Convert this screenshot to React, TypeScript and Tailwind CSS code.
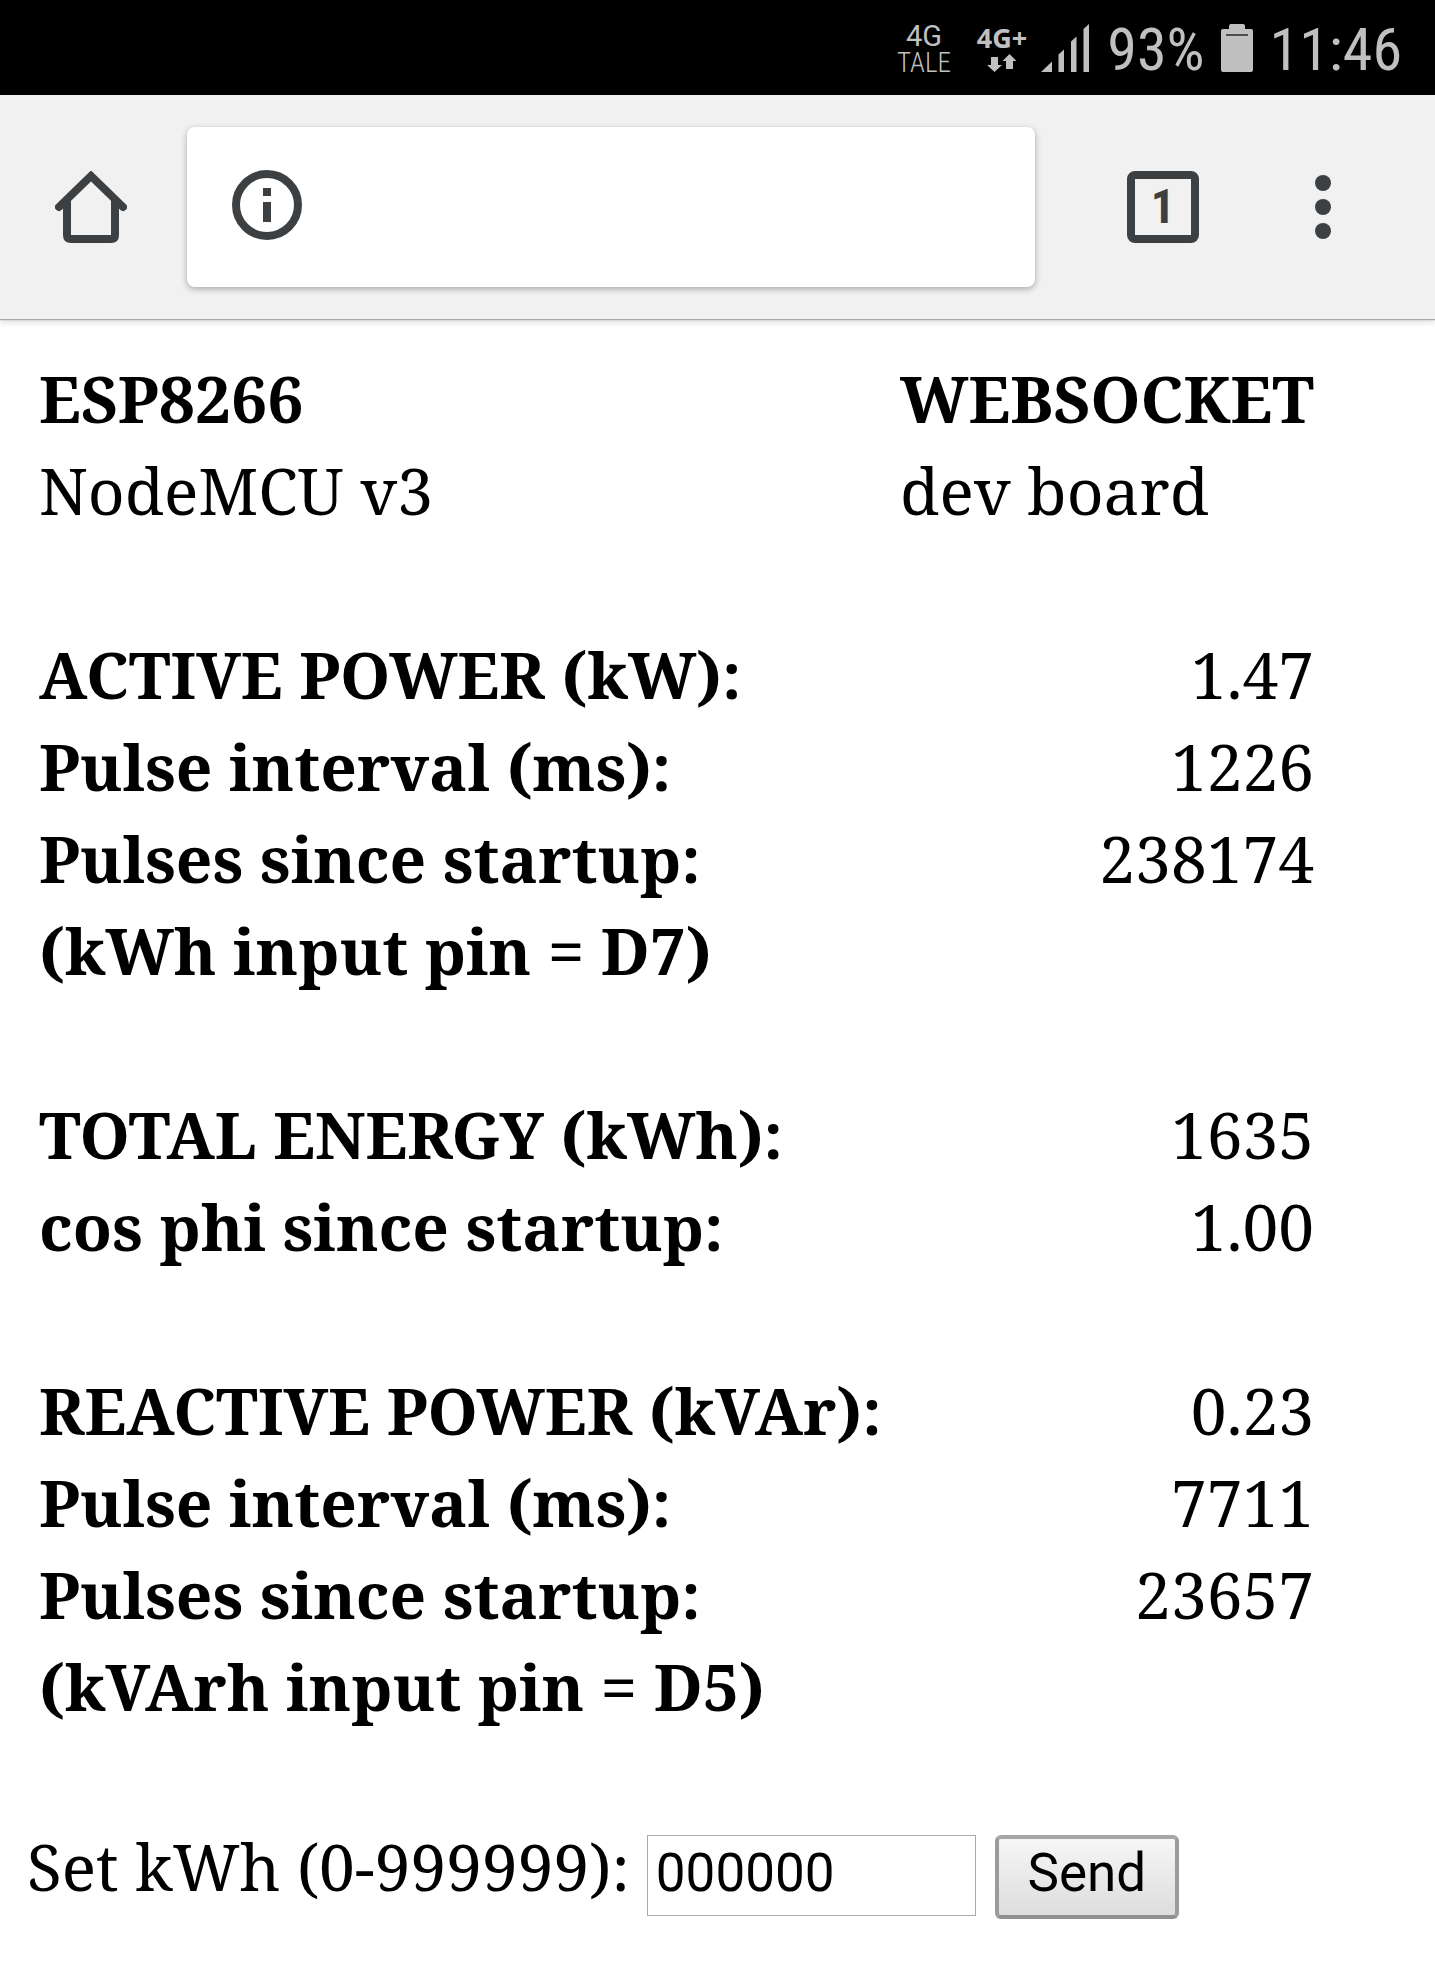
import React, { useState } from 'react';

type Reading = { label: string; value?: string };

const groups: Reading[][] = [
  [
    { label: 'ACTIVE POWER (kW):', value: '1.47' },
    { label: 'Pulse interval (ms):', value: '1226' },
    { label: 'Pulses since startup:', value: '238174' },
    { label: '(kWh input pin = D7)' },
  ],
  [
    { label: 'TOTAL ENERGY (kWh):', value: '1635' },
    { label: 'cos phi since startup:', value: '1.00' },
  ],
  [
    { label: 'REACTIVE POWER (kVAr):', value: '0.23' },
    { label: 'Pulse interval (ms):', value: '7711' },
    { label: 'Pulses since startup:', value: '23657' },
    { label: '(kVArh input pin = D5)' },
  ],
];

function StatusBar() {
  return (
    <div className="flex h-[95px] justify-end bg-black pr-[33px] text-[#c0c0c0]">
      <div className="flex flex-col items-center pt-5">
        <span className="font-['Roboto',sans-serif] text-[29px] leading-8">4G</span>
        <span className="font-['Roboto_Condensed',sans-serif] text-[27px] leading-[22px] font-light">TALE</span>
      </div>
      <div className="ml-[26px] flex flex-col items-center pt-[22px] font-['Noto_Sans',sans-serif]">
        <span className="text-[27px] leading-8 font-bold">4G+</span>
        <svg className="h-[18px] w-[30px]" viewBox="0 0 30 18" fill="currentColor" aria-hidden="true">
          <path d="M4 3h7v8h4L7.500 18 0 11h4z" />
          <path d="M19 15V7h-3.500L22.500 0 29.500 7H26v8z" />
        </svg>
      </div>
      <svg className="mt-6 ml-[14px] h-12 w-12" viewBox="0 0 48 48" fill="currentColor" aria-hidden="true">
        <path d="M0 48 11 37.500V48z" />
        <path d="M17.500 48V30.500L23 25.500V48z" />
        <path d="M30 48V17.500L35.500 12.500V48z" />
        <path d="M42.500 48V5L48 0V48z" />
      </svg>
      <span className="ml-[18px] font-['Roboto_Condensed',sans-serif] text-[60px] leading-[100px]">93%</span>
      <svg className="mt-6 ml-4 h-12 w-8" viewBox="0 0 32 48" aria-hidden="true">
        <path
          fill="currentColor"
          d="M10 0h12q2 0 2 2v3h6q2 0 2 2v39q0 2-2 2H2q-2 0-2-2V7q0-2 2-2h6V2q0-2 2-2z"
        />
        <path fill="#4d4d4d" d="M5 10h22v2H5z" />
      </svg>
      <span className="ml-[17px] font-['Roboto_Condensed',sans-serif] text-[60px] leading-[100px]">11:46</span>
    </div>
  );
}

function Toolbar() {
  return (
    <header className="flex h-56 items-center bg-[#f1f1f1] pr-[104px] pl-[55px] text-[#3d4043] shadow-[0_1px_1px_#a8a8a8,0_3px_6px_rgba(0,0,0,0.15)]">
      <button type="button" aria-label="Home" className="shrink-0">
        <svg
          className="block size-[72px]"
          viewBox="0 0 72 72"
          fill="none"
          stroke="currentColor"
          strokeWidth="8"
          aria-hidden="true"
        >
          <path strokeLinecap="round" d="M4 36 36 5 68 36" />
          <path d="M12 27V64q0 4 4 4H56q4 0 4-4V27" />
        </svg>
      </button>
      <div className="ml-[60px] flex h-40 min-w-0 flex-1 items-center rounded-lg bg-white pl-[45px] shadow-[0_2px_6px_rgba(0,0,0,0.3)]">
        <button type="button" aria-label="Site information" className="shrink-0">
          <svg className="mb-1 block size-[70px]" viewBox="0 0 70 70" aria-hidden="true">
            <circle cx="35" cy="35" r="31" fill="none" stroke="currentColor" strokeWidth="8" />
            <path fill="currentColor" d="M31 18h8v8h-8zM31 32h8v20h-8z" />
          </svg>
        </button>
        <input
          type="text"
          aria-label="Address"
          className="h-full min-w-0 flex-1 bg-transparent px-6 font-['Roboto',sans-serif] text-5xl outline-none"
        />
      </div>
      <button
        type="button"
        aria-label="1 open tab"
        className="ml-[92px] size-[72px] shrink-0 rounded-lg border-8 border-current text-center font-['Roboto_Condensed',sans-serif] text-5xl leading-[56px] font-bold"
      >
        1
      </button>
      <button type="button" aria-label="More options" className="ml-[116px] flex shrink-0 flex-col gap-2">
        <span className="size-4 rounded-full bg-current" />
        <span className="size-4 rounded-full bg-current" />
        <span className="size-4 rounded-full bg-current" />
      </button>
    </header>
  );
}

export default function App() {
  const [kwh, setKwh] = useState('000000');
  return (
    <div className="bg-white">
      <StatusBar />
      <Toolbar />
      <main className="pt-[34px] font-['Noto_Serif',serif] text-[64px] leading-[92px] text-black">
        <div className="pr-[121px] pl-[39px]">
          <table className="w-full border-collapse whitespace-nowrap">
            <thead>
              <tr>
                <th scope="col" className="w-full p-0 text-left font-bold">
                  ESP8266
                </th>
                <th scope="col" className="p-0 text-left font-bold">
                  WEBSOCKET
                </th>
              </tr>
            </thead>
            <tbody>
              <tr>
                <td className="p-0">NodeMCU v3</td>
                <td className="p-0">dev board</td>
              </tr>
            </tbody>
            {groups.map((rows) => (
              <tbody key={rows[0].label}>
                <tr>
                  <td colSpan={2} className="h-[92px] p-0" />
                </tr>
                {rows.map((row) => (
                  <tr key={row.label}>
                    <th scope="row" className="p-0 text-left font-bold">
                      {row.label}
                    </th>
                    <td className="p-0 text-right">{row.value}</td>
                  </tr>
                ))}
              </tbody>
            ))}
          </table>
        </div>
        <form
          className="mt-[88px] flex items-baseline pl-[27px] whitespace-nowrap"
          onSubmit={(event) => event.preventDefault()}
        >
          <label htmlFor="kwh">Set kWh (0-999999):</label>
          <input
            id="kwh"
            type="text"
            value={kwh}
            maxLength={6}
            onChange={(event) => setKwh(event.target.value)}
            className="ml-[17px] h-[81px] w-[329px] border border-[#a9a9a9] bg-white px-2 pb-1 font-['Roboto',sans-serif] text-[53px] leading-[72px]"
          />
          <button
            type="submit"
            className="ml-[19px] h-[84px] w-[184px] rounded-md border-4 border-t-[#a6a6a6] border-r-[#9b9b9b] border-b-[#909090] border-l-[#9b9b9b] bg-linear-to-b from-[#f6f6f6] to-[#dddddd] pb-2 font-['Roboto',sans-serif] text-[53px] leading-[68px]"
          >
            Send
          </button>
        </form>
      </main>
    </div>
  );
}
